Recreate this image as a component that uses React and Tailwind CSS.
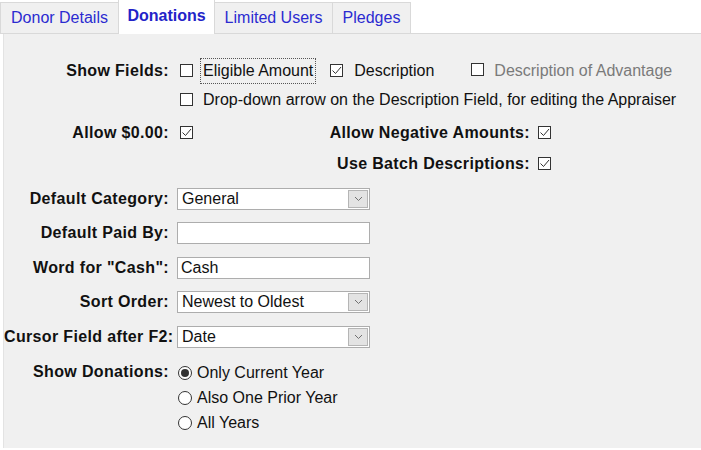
import React from 'react'

const Check = ({ checked }) => (
  <span className="inline-flex w-[13px] h-[13px] shrink-0 items-center justify-center border border-[#333333] bg-white">
    {checked && (
      <svg width="11" height="11" viewBox="0 0 11 11" fill="none">
        <path d="M1.5 5.5 L4.5 8.5 L10 2" stroke="#333333" strokeWidth="1" />
      </svg>
    )}
  </span>
)

const Radio = ({ checked }) => (
  <span className="inline-flex w-[14px] h-[14px] shrink-0 items-center justify-center rounded-full border border-[#333333] bg-white">
    {checked && <span className="w-[8px] h-[8px] rounded-full bg-[#333333]" />}
  </span>
)

const Select = ({ value }) => (
  <div className="flex items-center w-[193px] h-[22px] border border-[#adadad] bg-white">
    <span className="flex-1 pl-[4px] text-[#111]">{value}</span>
    <span className="flex items-center justify-center w-[20px] h-[18px] mr-[1px] bg-[#e3e3e3] border border-[#b5b5b5]">
      <svg width="9" height="6" viewBox="0 0 9 6" fill="none">
        <path d="M1 1 L4.5 4.5 L8 1" stroke="#707070" strokeWidth="1" />
      </svg>
    </span>
  </div>
)

const Input = ({ value }) => (
  <div className="flex items-center w-[193px] h-[22px] border border-[#adadad] bg-white pl-[3px] text-[#111]">
    {value}
  </div>
)

const Label = ({ children }) => (
  <div className="w-[165px] shrink-0 text-right font-bold tracking-[0.35px] text-[#111] whitespace-nowrap">{children}</div>
)

const tabs = [
  { name: 'Donor Details', w: 'w-[119px]' },
  { name: 'Donations', w: 'w-[97px]', active: true },
  { name: 'Limited Users', w: 'w-[119px]' },
  { name: 'Pledges', w: 'w-[79px]' },
]

export default function App() {
  return (
    <div className="w-[701px] h-[450px] bg-white overflow-hidden text-[16px] text-[#111]" style={{ fontFamily: '"Liberation Sans", Arial, sans-serif' }}>
      {/* Tabs */}
      <div className="flex items-end h-[34px] border-b border-[#d9d9d9]">
        {tabs.map((t) =>
          t.active ? (
            <div key={t.name} className={`${t.w} h-[35px] -mb-px -ml-px flex items-center justify-center bg-white border border-b-0 border-[#d9d9d9] font-bold text-[#2323c8] pb-[3px]`}>
              {t.name}
            </div>
          ) : (
            <div key={t.name} className={`${t.w} h-[31px] flex items-center justify-center bg-[#f0f0f0] border border-b-0 border-[#d9d9d9] text-[#2b2bd0] -ml-px first:ml-0`}>
              {t.name}
            </div>
          )
        )}
      </div>

      {/* Panel */}
      <div className="ml-[3px] h-[414px] bg-[#f0f0f0] border-l border-[#e3e3e3] pt-[23px]">
        <div className="flex items-center h-[27px]">
          <Label>Show Fields:</Label>
          <div className="flex items-center ml-[11px]">
            <Check />
            <span className="ml-[7px] px-[2px] border border-dotted border-[#555]">Eligible Amount</span>
            <span className="ml-[14px]"><Check checked /></span>
            <span className="ml-[11px]">Description</span>
            <span className="ml-[37px]"><Check /></span>
            <span className="ml-[10px] text-[#7a7a7a]">Description of Advantage</span>
          </div>
        </div>
        <div className="flex items-center h-[31px] pl-[176px]">
          <Check />
          <span className="ml-[10px]">Drop-down arrow on the Description Field, for editing the Appraiser</span>
        </div>
        <div className="flex items-center h-[35px]">
          <Label>Allow $0.00:</Label>
          <span className="ml-[11px]"><Check checked /></span>
          <div className="w-[337px] text-right font-bold tracking-[0.35px] text-[#111]">Allow Negative Amounts:</div>
          <span className="ml-[8px]"><Check checked /></span>
        </div>
        <div className="flex items-center h-[28px]">
          <div className="w-[526px] text-right font-bold tracking-[0.35px] text-[#111]">Use Batch Descriptions:</div>
          <span className="ml-[8px]"><Check checked /></span>
        </div>

        <div className="mt-[4px] flex flex-col">
          <div className="flex items-center h-[34px]">
            <Label>Default Category:</Label>
            <div className="ml-[8px]"><Select value="General" /></div>
          </div>
          <div className="flex items-center h-[34.5px]">
            <Label>Default Paid By:</Label>
            <div className="ml-[8px]"><Input value="" /></div>
          </div>
          <div className="flex items-center h-[34.5px]">
            <Label>Word for "Cash":</Label>
            <div className="ml-[8px]"><Input value="Cash" /></div>
          </div>
          <div className="flex items-center h-[34.5px]">
            <Label>Sort Order:</Label>
            <div className="ml-[8px]"><Select value="Newest to Oldest" /></div>
          </div>
          <div className="flex items-center h-[34.5px]">
            <Label>Cursor Field after F2:</Label>
            <div className="ml-[8px]"><Select value="Date" /></div>
          </div>
        </div>

        <div className="flex items-start mt-[6px]">
          <Label>Show Donations:</Label>
          <div className="ml-[9px] flex flex-col">
            {['Only Current Year', 'Also One Prior Year', 'All Years'].map((o, i) => (
              <div key={o} className="flex items-center h-[25px]">
                <Radio checked={i === 0} />
                <span className="ml-[5px]">{o}</span>
              </div>
            ))}
          </div>
        </div>
      </div>
    </div>
  )
}
